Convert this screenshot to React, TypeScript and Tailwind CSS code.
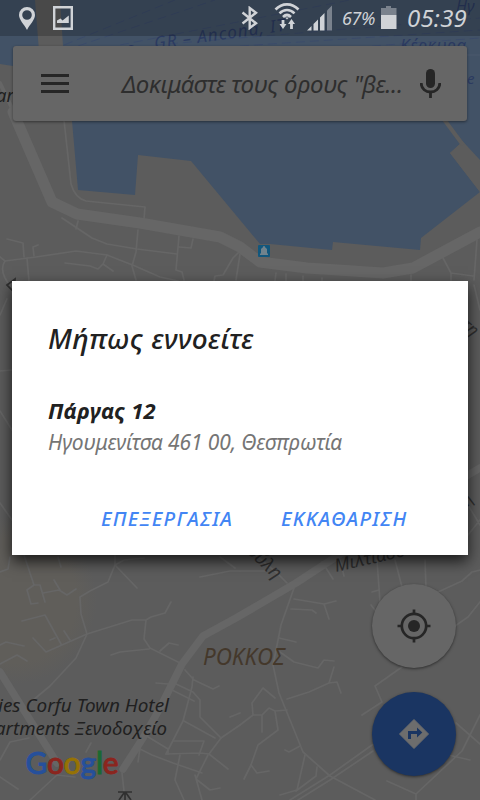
const LAND = '#5c5c5c';
const WATER = '#425266';

const majorRoads = [
  'M13 112 L52 202 L77 214 L140 223 L220 237 L240 247 L260 262 L307 268 L383 273 L413 268 L480 232',
];

const mediumRoads = [
  'M480 468 L400 515 L296 583 L236 618 L203 636 L182 664 L160 708 L143 738 L123 769',
  'M0 672 L25 712 L57 763',
];

const minorRoads = [
  'M64 120 L71 184 Q75 198 86 201 L145 207 L144 219',
  'M62 218 L92 238 L107 244 L137 249 L177 254',
  'M78 221 L76 229',
  'M138 230 L136 252 L132 266 L136 280',
  'M0 257 L5 261 L36 257 L76 251 L107 255 L135 266 L160 277 L178 281',
  'M5 261 Q0 268 5 278 L8 283',
  'M7 239 L23 243 L24 257 M38 245 L33 247 L34 256 M27 258 L29 281',
  'M107 255 L103 264 L113 271 M65 263 L90 266 L98 269 L103 264',
  'M179 236 L176 270 L182 272 L184 280 M179 247 L191 248 L193 239',
  'M240 251 L233 258 L223 275 L215 276 L214 281',
  'M240 254 L236 280 M276 273 L275 281 M286 274 V281 M303 276 V281 M322 278 V281',
  'M411 275 V281 M443 258 L451 273 L473 276 M451 273 V281 M477 240 L474 280',
  'M0 572 L8 569 L10 557 M24 555 L34 585 L27 590 L31 604 L38 603 M34 585 L40 585 L45 602 M43 593 L59 590 L67 595 L76 589 M54 580 L60 590',
  'M58 557 L61 567 M115 555 V565 L108 582 L90 591 L80 597 L81 614 L87 634 L76 658 L50 686 L32 701',
  'M115 565 L137 588 M115 565 L124 560 L144 558',
  'M22 621 L45 615 L61 644 M33 638 L46 652 L87 634 L132 620 L146 620 L151 617 L165 613 L171 602',
  'M64 631 L70 640 M50 640 L55 638',
  'M146 620 L144 639 L150 648 L182 664 M111 655 L120 652 L149 649 M160 651 L169 643 L178 645',
  'M0 645 L6 642 L24 646 M0 664 L17 655 L27 661',
  'M185 670 L194 680 L213 689 L219 686 M193 677 L192 687 L183 721 L166 754',
  'M176 684 L193 692 L200 700 V717 L221 738 L240 725',
  'M172 690 L194 701 M184 721 L215 738 M138 748 L152 755 L173 763 L202 773 M145 735 L168 749 L168 754 M140 748 L138 762',
  'M174 741 H204 L199 755 M166 754 L200 753 L209 754 L221 738',
  'M180 755 L175 780 L184 800 M195 775 L202 800 M208 755 L196 779 L210 790 L220 788',
  'M209 754 L228 769 M230 717 L240 713',
  'M0 777 L18 789 M0 760 L10 742 L29 738 M30 800 L57 775 L75 777 M91 743 L86 752',
  'M122 773 L125 800 M156 683 L168 684 M200 577 L230 571 L240 571 M220 557 L235 568',
  'M294 588 L281 625 L273 665 L279 693 L290 720 L303 752 L330 776 L375 800',
  'M294 599 L324 604 L336 601 M291 609 L312 610 L316 613 M324 604 L329 619 M279 638 L296 642',
  'M280 652 L294 662 L318 668 L324 660 L334 661 M287 699 L309 692 L329 683 L334 667 M329 683 L337 682 L341 693',
  'M275 698 L263 688 L252 703 L253 715 L240 725 M253 715 H262 L269 708 L275 711 L278 730 L258 745 L251 765 L244 779 M275 711 L287 710 M262 715 V732',
  'M251 765 L257 773 L269 771 M285 750 L289 752 L300 746',
  'M305 755 L297 790 L280 795 M317 767 L316 776 L296 791',
  'M290 800 L330 775 L372 745 L400 735 M298 800 L330 780 L373 751',
  'M375 686 L382 702 L362 715 M375 686 L402 667 M455 626 L468 617 L480 602 M438 592 L462 581 L472 572 L480 570',
  'M377 560 L380 602 M395 560 L402 587 M425 560 L426 588 M372 592 L379 590 M371 605 L378 614',
  'M387 781 L416 794 L462 751 L480 715 M456 723 L480 744 M448 755 L470 760 M416 794 V800',
  'M240 571 L265 571 M287 583 L277 573 L250 550 M322 562 L333 579 M340 560 L344 576',
  'M0 315 L7 299 M0 371 L12 370 M0 411 L12 430 M0 503 L12 520 M468 505 L480 525 M474 285 L480 310 M468 535 L480 520',
];

const label = {
  fontFamily: '"Noto Sans", sans-serif',
  fontStyle: 'italic',
};

function MapCanvas() {
  return (
    <svg className="absolute inset-0" width="480" height="800" viewBox="0 0 480 800">
      <defs>
        <radialGradient id="park">
          <stop offset="0.75" stopColor="#605e5a" />
          <stop offset="1" stopColor="#605e5a" stopOpacity="0" />
        </radialGradient>
      </defs>
      <rect width="480" height="800" fill={LAND} />
      <ellipse cx="15" cy="600" rx="82" ry="84" fill="url(#park)" />
      <path d="M0 0 H35 L40 64 L13 66 L0 64 Z" fill={WATER} />
      <path
        d="M60 0 L63 46 L72 121 L78 190 L135 195 L138 155 L191 161 L240 220 L260 244 L270 244 L332 250 L333 242 L420 250 L421 238 L480 192 L450 153 L461 143 L443 120 L480 160 V0 Z"
        fill={WATER}
      />
      <path d="M443 118 L461 142 L480 162 V192 L450 153 L461 143 Z" fill={LAND} />
      <path d="M443 118 L463 145" stroke={LAND} strokeWidth="4" />
      <g fill="none" stroke="#35466b" strokeWidth="0.8" strokeDasharray="9 5" opacity="0.7">
        <path d="M64 45 L175 0 M78 46 L215 0 M120 45 L350 0 M155 45 L480 18 M240 46 L480 30 M372 46 L480 38" />
      </g>
      <path d="M460 55 H480" stroke="#4b596d" />
      <g fill="none" stroke="#666666" strokeLinejoin="round" strokeLinecap="round">
        {minorRoads.map((d) => (
          <path key={d} d={d} strokeWidth="1.7" />
        ))}
        <path d="M0 83 L27 140" strokeWidth="4" />
        {mediumRoads.map((d) => (
          <path key={d} d={d} strokeWidth="7.5" />
        ))}
        {majorRoads.map((d) => (
          <path key={d} d={d} strokeWidth="11" />
        ))}
      </g>

      <g>
        <rect x="258" y="245" width="12" height="12" rx="1" fill="#12577d" />
        <path d="M260 255 V253.5 H261 V249 L262.5 247.5 H263 V246.2 H265 V247.5 H265.5 L267 249 V253.5 H268 V255 Z" fill="#71838d" />
      </g>

      <g style={label}>
        <g fill="#2b3a60" fontSize="17">
          <text x="126" y="54">ο</text>
          <text x="155" y="49" transform="rotate(-8 155 49)" textLength="132">GR – Ancona, IT</text>
          <text x="400" y="51" fontSize="17" textLength="66">Κέρκυρα</text>
          <text x="456" y="12" fontSize="16">Ηγ</text>
          <text x="467" y="84" fontSize="15">e</text>
        </g>
        <g fill="#202020" fontSize="18.5">
          <text x="-4" y="102">ar</text>
          <text x="-2" y="712" textLength="171" lengthAdjust="spacingAndGlyphs">ies Corfu Town Hotel</text>
          <text x="-5" y="735" textLength="172" lengthAdjust="spacingAndGlyphs">artments Ξενοδοχείο</text>
        </g>
        <text x="203" y="665" fontSize="23" fill="#44382b" textLength="82" lengthAdjust="spacingAndGlyphs">ΡΟΚΚΟΣ</text>
        <g fill="#303030" fontSize="18">
          <text x="246" y="552" transform="rotate(44 246 552)">ούλη</text>
          <text x="336" y="572" transform="rotate(-13 336 572)">Μιλτιάδου</text>
          <text x="461" y="326" transform="rotate(42 461 326)" fontSize="16">τη</text>
          <text x="468" y="507" transform="rotate(-50 468 507)" fontSize="16">η</text>
        </g>
        <path d="M7 285 L15 279 L14 292 Z M118 792 H132 M125 792 V800 M124 793 L119 800 M126 793 L131 800" fill="none" stroke="#303030" strokeWidth="1.7" />
      </g>

      <text x="25.5" y="773.5" fontSize="31.5" fontWeight="500" letterSpacing="-0.2" textLength="93" lengthAdjust="spacingAndGlyphs" fontFamily="Lato, sans-serif" strokeWidth="0.9">
        <tspan fill="#26509b" stroke="#26509b">G</tspan>
        <tspan fill="#8b251e" stroke="#8b251e">o</tspan>
        <tspan fill="#967204" stroke="#967204">o</tspan>
        <tspan fill="#26509b" stroke="#26509b">g</tspan>
        <tspan fill="#1b6a31" stroke="#1b6a31">l</tspan>
        <tspan fill="#8b251e" stroke="#8b251e">e</tspan>
      </text>
    </svg>
  );
}

function StatusBar() {
  return (
    <header className="flex h-9 shrink-0 items-center bg-black/20 text-[#d0d3d7]">
      <svg className="ml-[19px]" width="16" height="23" viewBox="0 0 16 23" fill="currentColor">
        <path fillRule="evenodd" d="M8 0a8 8 0 0 0-8 8c0 5 5 9 8 15 3-6 8-10 8-15a8 8 0 0 0-8-8Zm0 3.2a4.8 4.8 0 1 1 0 9.6 4.8 4.8 0 0 1 0-9.6Z" />
      </svg>
      <svg className="ml-[18px]" width="20" height="24" viewBox="0 0 20 24" fill="currentColor">
        <path fillRule="evenodd" d="M0 0H20V24H0ZM2.4 2.4V21.6H17.6V2.4Z" />
        <path d="M4 17V14.5L7.5 12.5L9.5 14.5L15.8 9.5V17Z" />
      </svg>
      <svg className="ml-[168px]" width="18" height="24" viewBox="0 0 18 24" fill="none" stroke="currentColor" strokeWidth="2.4">
        <path d="M1.5 6.5L15 17.2L8.7 22V2L15 6.8L1.5 17.5" />
      </svg>
      <svg className="-mt-1 ml-[15px]" width="26" height="28" viewBox="0 0 26 28" fill="none" stroke="currentColor" strokeWidth="2.6">
        <path d="M1.5 7.5C8 .6 18 .6 24.5 7.5M5.5 11.3C10 6.8 16 6.8 20.5 11.3M9 15C11.5 12.5 14.5 12.5 17 15" />
        <path d="M11 15.5H15L13 17.5ZM5.5 22H12.5L9 27ZM14 22H21L17.5 17Z" fill="currentColor" stroke="none" />
        <path d="M9 18V24M17.5 21V27" strokeWidth="2.8" />
      </svg>
      <svg className="ml-[7px]" width="26" height="26" viewBox="0 0 26 26" fill="currentColor">
        <path d="M0 25.5L4.5 21V25.5ZM6.5 19L11 14.5V25.5H6.5ZM13 12.5L17.5 8V25.5H13Z" />
        <path d="M20 5.5L25 .5V25.5H20Z" opacity="0.45" />
      </svg>
      <span className="ml-[9px] w-[36px] whitespace-nowrap text-[18px] italic leading-none tracking-[-0.4px]">67%</span>
      <svg className="ml-[3px]" width="16" height="24" viewBox="0 0 16 24" fill="currentColor">
        <path d="M5 0H10V2H15.5V9H0V2H5Z" opacity="0.45" />
        <path d="M0 9H15.5V23H0Z" />
      </svg>
      <span className="ml-[10px] whitespace-nowrap text-[24px] italic leading-none tracking-[0.2px]">05:39</span>
    </header>
  );
}

function SearchBar() {
  return (
    <div className="mx-[13px] mt-2.5 flex h-[75px] shrink-0 items-center rounded-[3px] bg-[#666666] text-[#262626] shadow-[0_1px_3px_rgba(0,0,0,0.45)]">
      <div className="ml-7 flex w-7 flex-col gap-[5px]">
        <div className="h-[3px] bg-[#262626]" />
        <div className="h-[3px] bg-[#262626]" />
        <div className="h-[3px] bg-[#262626]" />
      </div>
      <span className="ml-[53px] w-[282px] whitespace-nowrap text-[24px] italic tracking-[-0.35px] text-[#2e2e2e]">
        Δοκιμάστε τους όρους "βε...
      </span>
      <svg className="ml-4" width="21" height="29" viewBox="0 0 21 29">
        <rect x="6" y="0" width="9" height="19" rx="4.5" fill="currentColor" />
        <path d="M1.2 14C1.2 26 19.8 26 19.8 14M10.5 23V29" fill="none" stroke="currentColor" strokeWidth="2.8" />
      </svg>
    </div>
  );
}

function SuggestionDialog() {
  return (
    <section
      role="dialog"
      className="absolute left-3 top-[281px] flex h-[274px] w-[456px] flex-col bg-white px-9 shadow-[0_6px_14px_rgba(0,0,0,0.75)]"
    >
      <h1 className="mt-[39px] h-9 whitespace-nowrap text-[28px] font-medium italic leading-9 tracking-[0.45px] text-[#212121]">
        Μήπως εννοείτε
      </h1>
      <div className="mt-[38px] flex flex-col whitespace-nowrap">
        <span className="h-8 text-[22px] font-bold italic leading-8 tracking-[0.1px] text-[#212121]">Πάργας 12</span>
        <span className="h-8 text-[21px] italic leading-8 tracking-[-0.13px] text-[#757575]">
          Ηγουμενίτσα 461 00, Θεσπρωτία
        </span>
      </div>
      <div className="mt-[45px] flex whitespace-nowrap text-[20px] font-medium italic leading-8 tracking-[1.3px] text-[#4285f4]">
        <button className="ml-[53px] w-[132px] text-left">ΕΠΕΞΕΡΓΑΣΙΑ</button>
        <button className="ml-12 w-[128px] text-left">ΕΚΚΑΘΑΡΙΣΗ</button>
      </div>
    </section>
  );
}

function MapButtons() {
  return (
    <div className="mb-6 mr-6 mt-auto flex flex-col gap-6 self-end">
      <button className="flex h-[84px] w-[84px] items-center justify-center rounded-full bg-[#666666] shadow-[0_1px_3px_rgba(0,0,0,0.5)]">
        <svg width="34" height="34" viewBox="0 0 34 34" fill="none" stroke="#262626" strokeWidth="2.7">
          <circle cx="17" cy="17" r="12.2" />
          <circle cx="17" cy="17" r="6" fill="#262626" stroke="none" />
          <path d="M17 .5V5M17 29V33.5M.5 17H5M29 17H33.5" />
        </svg>
      </button>
      <button className="flex h-[84px] w-[84px] items-center justify-center rounded-full bg-[#1a3562] shadow-[0_1px_3px_rgba(0,0,0,0.5)]">
        <svg width="32" height="32" viewBox="0 0 32 32">
          <path d="M16 1.5L30.5 16L16 30.5L1.5 16Z" fill="#6d6d6d" stroke="#6d6d6d" strokeLinejoin="round" />
          <path d="M10 21V13H19V9.5L24.3 14.5L19 19.5V16H13V21Z" fill="#1a3562" />
        </svg>
      </button>
    </div>
  );
}

export default function App() {
  return (
    <main className="relative h-[800px] w-[480px] overflow-hidden font-['Noto_Sans',sans-serif]">
      <MapCanvas />
      <div className="relative flex h-full flex-col">
        <StatusBar />
        <SearchBar />
        <MapButtons />
      </div>
      <SuggestionDialog />
    </main>
  );
}
